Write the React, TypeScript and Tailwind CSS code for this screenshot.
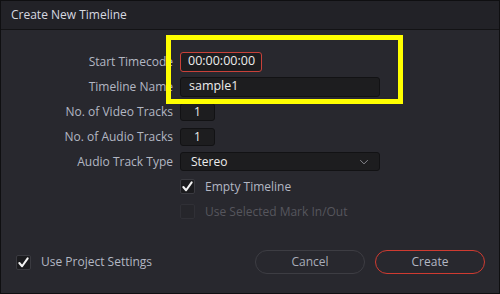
import type { ReactNode } from 'react'

function Check({ checked, disabled }: { checked?: boolean; disabled?: boolean }) {
  return (
    <span
      className={`flex h-[15px] w-[15px] shrink-0 items-center justify-center rounded-[2px] border ${
        disabled ? 'border-[#303036] bg-[#26262b]' : 'border-[#3a3a40] bg-[#1b1b1e]'
      }`}
    >
      {checked && (
        <svg viewBox="0 0 14 14" className="h-[13px] w-[13px]">
          <path d="M2.5 7.5 L5.5 11 L11.5 2.5" fill="none" stroke="#f2f2f2" strokeWidth="2.2" strokeLinecap="round" strokeLinejoin="round" />
        </svg>
      )}
    </span>
  )
}

function Row({ label, children }: { label?: string; children: ReactNode }) {
  return (
    <div className="flex h-[25px] items-center">
      <div className="w-[172px] shrink-0 text-right text-[#b3b7c3]">{label}</div>
      <div className="ml-[7px] flex items-center">{children}</div>
    </div>
  )
}

const field = 'flex items-center rounded-[3px] border bg-[#1d1d1f] text-[#ececec]'

export default function App() {
  return (
    <div
      className="relative flex h-[294px] w-[500px] flex-col border border-[#0f0f11] bg-[#28282e] text-[12px]"
      style={{ fontFamily: '"Open Sans", "Noto Sans", sans-serif' }}
    >
      <div className="flex h-[29px] shrink-0 items-center border-b border-[#131315] bg-[#222227] pl-[10px] text-[12px] text-[#d6d8e0]">
        Create New Timeline
      </div>

      <div className="flex flex-1 flex-col pt-[19px]">
        <Row label="Start Timecode">
          <div className={`${field} h-[20px] w-[82px] border-[#c8413a] pl-[7px] text-[12.5px]`}>00:00:00:00</div>
        </Row>
        <Row label="Timeline Name">
          <div className={`${field} h-[20px] w-[200px] border-[#121214] pl-[8px] text-[12.5px]`}>sample1</div>
        </Row>
        <Row label="No. of Video Tracks">
          <div className={`${field} h-[18px] w-[35px] justify-center border-[#121214]`}>1</div>
        </Row>
        <Row label="No. of Audio Tracks">
          <div className={`${field} h-[18px] w-[35px] justify-center border-[#121214]`}>1</div>
        </Row>
        <Row label="Audio Track Type">
          <div className={`${field} h-[19px] w-[200px] justify-between border-[#121214] pl-[10px] pr-[10px]`}>
            <span>Stereo</span>
            <svg viewBox="0 0 12 8" className="h-[6px] w-[10px]">
              <path d="M1 1.5 L6 6.5 L11 1.5" fill="none" stroke="#8c8c93" strokeWidth="1.3" />
            </svg>
          </div>
        </Row>
        <Row>
          <Check checked />
          <span className="ml-[10px] text-[#b3b7c3]">Empty Timeline</span>
        </Row>
        <Row>
          <Check disabled />
          <span className="ml-[10px] text-[#56565d]">Use Selected Mark In/Out</span>
        </Row>

        <div className="mt-auto mb-[19px] flex h-[24px] items-center pl-[15px] pr-[14px]">
          <Check checked />
          <span className="ml-[10px] text-[#b3b7c3]">Use Project Settings</span>
          <div className="ml-auto flex gap-[10px]">
            <button className="h-[24px] w-[110px] rounded-full border border-[#3d3d43] text-[#a9adb9]">Cancel</button>
            <button className="h-[24px] w-[110px] rounded-full border border-[#cf3b31] text-[#b3b7c3]">Create</button>
          </div>
        </div>
      </div>

      <div className="pointer-events-none absolute left-[165px] top-[34px] h-[69px] w-[237px] border-[5px] border-[#ffff00]" />
    </div>
  )
}
